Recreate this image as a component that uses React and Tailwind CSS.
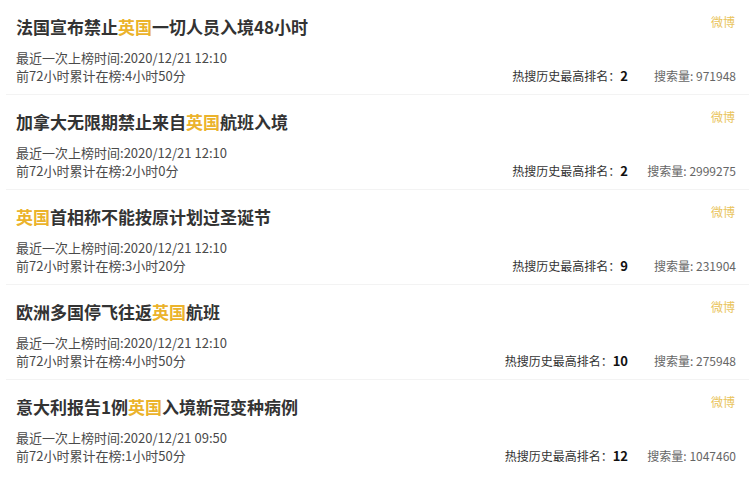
import React from 'react';

const items = [
  { pre: '法国宣布禁止', post: '一切人员入境48小时', time: '2020/12/21 12:10', dur: '4小时50分', rank: 2, count: 971948 },
  { pre: '加拿大无限期禁止来自', post: '航班入境', time: '2020/12/21 12:10', dur: '2小时0分', rank: 2, count: 2999275 },
  { pre: '', post: '首相称不能按原计划过圣诞节', time: '2020/12/21 12:10', dur: '3小时20分', rank: 9, count: 231904 },
  { pre: '欧洲多国停飞往返', post: '航班', time: '2020/12/21 12:10', dur: '4小时50分', rank: 10, count: 275948 },
  { pre: '意大利报告1例', post: '入境新冠变种病例', time: '2020/12/21 09:50', dur: '1小时50分', rank: 12, count: 1047460 },
];

const font = { fontFamily: '"Noto Sans CJK SC", "Noto Sans", sans-serif' };

const Row = ({ item, last }) => (
  <div className={`h-[95px] px-[10px] flex flex-col ${last ? '' : 'border-b border-[#f3f3f3]'}`}>
    <div className="flex items-start justify-between pt-[16px]">
      <h3 className="text-[17px] leading-[22px] font-bold text-[#333]">
        {item.pre}
        <span className="text-[#ebb32c]">英国</span>
        {item.post}
      </h3>
      <span className="text-[12px] leading-[16px] text-[#e9c45c] mr-[4px] mt-[-2px]">微博</span>
    </div>
    <div className="flex items-end justify-between mt-[11px]">
      <div className="text-[13px] leading-[18px] text-[#4a4a4a]">
        <p>最近一次上榜时间:{item.time}</p>
        <p>前72小时累计在榜:{item.dur}</p>
      </div>
      <div className="flex items-center text-[12px] leading-[18px] mr-[3px]">
        <span className="text-[#333]">
          热搜历史最高排名：<b className="text-[#111] text-[13px] font-bold">{item.rank}</b>
        </span>
        <span className="w-[108px] text-right text-[#666]">搜索量: {item.count}</span>
      </div>
    </div>
  </div>
);

const App = () => {
  return (
    <div className="w-[755px] h-[485px] bg-white px-[6px] overflow-hidden" style={font}>
      {items.map((item, i) => (
        <Row key={i} item={item} last={i === items.length - 1} />
      ))}
    </div>
  );
};

export default App;
